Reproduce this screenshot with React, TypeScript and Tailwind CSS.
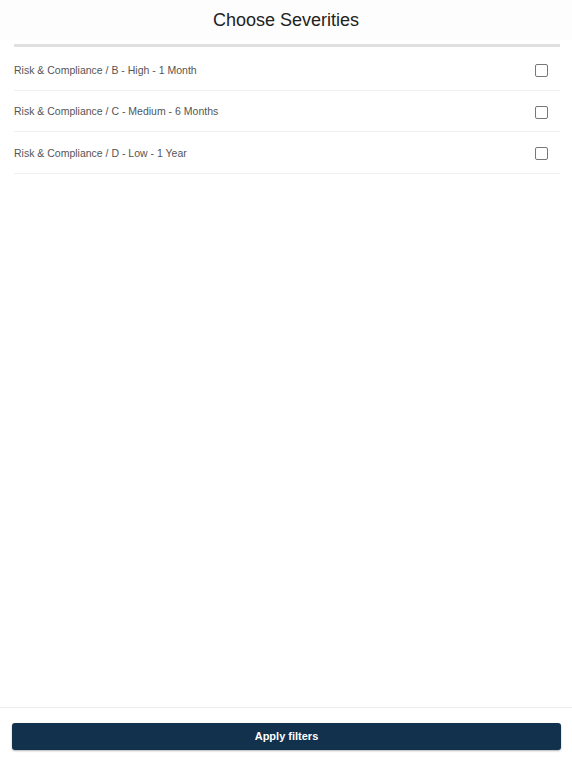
const severities = [
  'Risk & Compliance / B - High - 1 Month',
  'Risk & Compliance / C - Medium - 6 Months',
  'Risk & Compliance / D - Low - 1 Year',
];

const App = () => {
  return (
    <div className="flex h-[759px] flex-col bg-white font-['Liberation_Sans',Arial,sans-serif]">
      <div className="flex h-[40px] shrink-0 items-center justify-center bg-[#fdfdfd]">
        <h2 className="text-[18px] text-[#222]">Choose Severities</h2>
      </div>
      <div className="ml-[14px] mr-[12px] mt-[4px] h-[3px] bg-[#e0e0e0]" />

      <div className="ml-[14px] mr-[12px] flex flex-col pt-[2px]">
        {severities.map((s) => (
          <label
            key={s}
            className="flex h-[41.5px] items-center justify-between border-b border-[#efefef]"
          >
            <span className="mt-[3px] text-[10.5px] text-[#555]">{s}</span>
            <span className="mr-[12px] mt-[3px] h-[13px] w-[13px] rounded-[2px] border-[1.5px] border-[#777] bg-white" />
          </label>
        ))}
      </div>

      <div className="flex-1" />

      <div className="flex h-[52px] shrink-0 items-start border-t border-[#ececec] pl-[12px] pr-[11px] pt-[15px]">
        <button
          type="button"
          className="h-[27px] w-full rounded-[3px] bg-[#12314d] text-[11px] font-bold text-white shadow-[0_1px_2px_rgba(0,0,0,0.3)]"
        >
          Apply filters
        </button>
      </div>
    </div>
  );
};

export default App;
